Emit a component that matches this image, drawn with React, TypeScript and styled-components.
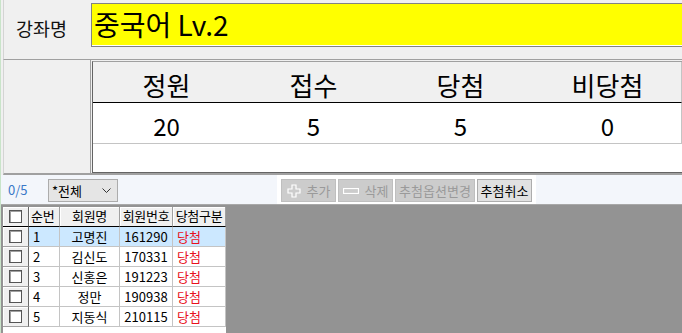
import React from 'react';
import styled, { createGlobalStyle } from 'styled-components';

const GlobalStyle = createGlobalStyle`
  body {
    margin: 0;
    background: #f0f0f0;
    font-family: "Noto Sans CJK KR", "Noto Sans", sans-serif;
  }
`;

type Member = {
  no: number,
  name: string,
  memberNo: string,
  result: string
}

const members: Member[] = [
  { no: 1, name: '고명진', memberNo: '161290', result: '당첨' },
  { no: 2, name: '김신도', memberNo: '170331', result: '당첨' },
  { no: 3, name: '신홍은', memberNo: '191223', result: '당첨' },
  { no: 4, name: '정만', memberNo: '190938', result: '당첨' },
  { no: 5, name: '지동식', memberNo: '210115', result: '당첨' },
];

const stats = [
  { label: '정원', value: 20 },
  { label: '접수', value: 5 },
  { label: '당첨', value: 5 },
  { label: '비당첨', value: 0 },
];

const Page = styled.div`
  width: 682px;
  height: 333px;
  overflow: hidden;
  display: flex;
  flex-direction: column;
  background: #f0f0f0;
  border-left: 1px solid #c9e4c9;
  box-sizing: border-box;
`;

const TitleRow = styled.div`
  height: 60px;
  margin-left: 2px;
  display: flex;
  border-left: 1px solid #d4d4d4;
  border-bottom: 1px solid #a0a0a0;
  box-sizing: border-box;
`;

const Label = styled.div`
  width: 87px;
  padding-left: 12px;
  box-sizing: border-box;
  font-size: 18.5px;
  line-height: 56px;
  color: #111;
`;

const TitleInput = styled.div`
  flex: 1;
  height: 44px;
  margin-top: 3px;
  background: #ffff00;
  border: 1px solid #828282;
  border-right: none;
  box-shadow: inset 0 -1px 0 #fff;
  box-sizing: border-box;
  padding-left: 2px;
  font-size: 28px;
  line-height: 40px;
  color: #000;
`;

const StatsRow = styled.div`
  height: 115px;
  margin-left: 2px;
  display: flex;
  border-left: 1px solid #d4d4d4;
  border-bottom: 2px solid #a0a0a0;
  box-sizing: border-box;
`;

const SidePanel = styled.div`
  width: 87px;
  border-right: 1px solid #a0a0a0;
  margin-right: 1px;
`;

const StatsTable = styled.div`
  flex: 1;
  margin-top: 1px;
  background: #fff;
  border-left: 1px solid #646464;
  border-top: 1px solid #a0a0a0;
  border-bottom: 1px solid #646464;
  display: flex;
  flex-direction: column;
`;

const StatsLine = styled.div<{ $head?: boolean }>`
  display: grid;
  grid-template-columns: repeat(4, 147px);
  height: 40px;
  background: ${p => (p.$head ? '#f0f0f0' : '#fff')};
  border-bottom: 1px solid ${p => (p.$head ? '#000' : '#c4c4c4')};
  border-right: 1px solid #c4c4c4;
  width: 588px;
`;

const StatsCell = styled.div<{ $head?: boolean }>`
  text-align: center;
  font-size: ${p => (p.$head ? 26 : 24)}px;
  line-height: 40px;
  padding-top: ${p => (p.$head ? 3 : 3)}px;
  color: #000;
`;

const Toolbar = styled.div`
  height: 30px;
  display: flex;
  align-items: flex-start;
  background: #f3f6fb;
  border-bottom: 1px solid #a8a8a8;
  box-sizing: border-box;
`;

const Count = styled.div`
  width: 47px;
  padding-left: 7px;
  box-sizing: border-box;
  font-size: 13px;
  line-height: 29px;
  color: #3a78c8;
`;

const Select = styled.div`
  width: 70px;
  height: 23px;
  margin-top: 4px;
  background: #e5e5e5;
  border: 1px solid #acacac;
  box-sizing: border-box;
  display: flex;
  align-items: center;
  justify-content: space-between;
  padding: 0 6px 0 3px;
  font-size: 13px;
  color: #000;
`;

const ButtonPanel = styled.div`
  margin-left: 159px;
  height: 29px;
  padding: 4px 4px 0 4px;
  background: #fff;
  display: flex;
  gap: 2px;
  box-sizing: border-box;
`;

const ToolButton = styled.div<{ $disabled?: boolean, $w: number }>`
  width: ${p => p.$w}px;
  height: 23px;
  box-sizing: border-box;
  display: flex;
  align-items: center;
  justify-content: center;
  gap: 6px;
  font-size: 13px;
  background: ${p => (p.$disabled ? '#cccccc' : '#e1e1e1')};
  border: 1px solid ${p => (p.$disabled ? '#bfbfbf' : '#adadad')};
  color: ${p => (p.$disabled ? '#9a9a9a' : '#000')};
  white-space: nowrap;
`;

const GridArea = styled.div`
  flex: 1;
  background: #939393;
  padding: 2px 0 0 2px;
  display: flex;
`;

const Grid = styled.div`
  width: 223px;
  background: #fff;
  display: grid;
  grid-template-columns: 26px 31px 60px 53px 53px;
  grid-auto-rows: 20px;
  align-content: start;
`;

const HeadCell = styled.div`
  background: #f0f0f0;
  border-right: 1px solid #a0a0a0;
  border-bottom: 1px solid #000;
  box-shadow: inset 1px 1px 0 #fff;
  font-size: 13px;
  line-height: 18px;
  text-align: center;
  color: #000;
  white-space: nowrap;
  overflow: hidden;
  letter-spacing: -0.3px;
`;

const CheckCell = styled.div`
  background: #f0f0f0;
  border-right: 1px solid #696969;
  border-bottom: 1px solid #a0a0a0;
  box-shadow: inset 1px 1px 0 #fff;
  display: flex;
  align-items: center;
  justify-content: center;
`;

const Box = styled.div`
  width: 11px;
  height: 11px;
  background: #fff;
  border: 1px solid #555;
  box-shadow: inset 1px 1px 0 #a0a0a0;
`;

const Cell = styled.div<{ $align?: string, $red?: boolean, $selected?: boolean }>`
  background: ${p => (p.$selected ? '#cce8ff' : '#fff')};
  border-right: 1px solid #c4c4c4;
  border-bottom: 1px solid #c4c4c4;
  font-size: 13px;
  line-height: 19px;
  text-align: ${p => p.$align || 'left'};
  padding: 0 4px;
  color: ${p => (p.$red ? '#e8101c' : '#000')};
  white-space: nowrap;
`;

const PlusIcon = () => (
  <svg width="14" height="14" viewBox="0 0 14 14">
    <path d="M5 1h4v4h4v4h-4v4h-4v-4h-4v-4h4z" fill="none" stroke="#fff" strokeWidth="1.2" />
  </svg>
);

const MinusIcon = () => (
  <svg width="16" height="6" viewBox="0 0 16 6">
    <rect x="0.5" y="0.5" width="15" height="5" fill="none" stroke="#fff" strokeWidth="1.2" />
  </svg>
);

const Chevron = () => (
  <svg width="9" height="6" viewBox="0 0 9 6">
    <path d="M0.5 0.5l4 4 4-4" fill="none" stroke="#333" strokeWidth="1" />
  </svg>
);

export default function App() {
  return (
    <Page>
      <GlobalStyle />
      <TitleRow>
        <Label>강좌명</Label>
        <TitleInput>중국어 Lv.2</TitleInput>
      </TitleRow>
      <StatsRow>
        <SidePanel />
        <StatsTable>
          <StatsLine $head>
            {stats.map(s => <StatsCell $head key={s.label}>{s.label}</StatsCell>)}
          </StatsLine>
          <StatsLine>
            {stats.map(s => <StatsCell key={s.label}>{s.value}</StatsCell>)}
          </StatsLine>
        </StatsTable>
      </StatsRow>
      <Toolbar>
        <Count>0/5</Count>
        <Select>
          <span>*전체</span>
          <Chevron />
        </Select>
        <ButtonPanel>
          <ToolButton $disabled $w={55}><PlusIcon />추가</ToolButton>
          <ToolButton $disabled $w={55}><MinusIcon />삭제</ToolButton>
          <ToolButton $disabled $w={80}>추첨옵션변경</ToolButton>
          <ToolButton $w={55}>추첨취소</ToolButton>
        </ButtonPanel>
      </Toolbar>
      <GridArea>
        <Grid>
          <CheckCell style={{ borderBottomColor: '#000' }}><Box /></CheckCell>
          <HeadCell style={{ textAlign: 'left', paddingLeft: 2 }}>순번</HeadCell>
          <HeadCell>회원명</HeadCell>
          <HeadCell>회원번호</HeadCell>
          <HeadCell>당첨구분</HeadCell>
          {members.map((m, i) => (
            <React.Fragment key={m.no}>
              <CheckCell><Box /></CheckCell>
              <Cell $selected={i === 0}>{m.no}</Cell>
              <Cell $selected={i === 0} $align="center">{m.name}</Cell>
              <Cell $selected={i === 0} $align="center">{m.memberNo}</Cell>
              <Cell $selected={i === 0} $red>{m.result}</Cell>
            </React.Fragment>
          ))}
        </Grid>
      </GridArea>
    </Page>
  );
}
